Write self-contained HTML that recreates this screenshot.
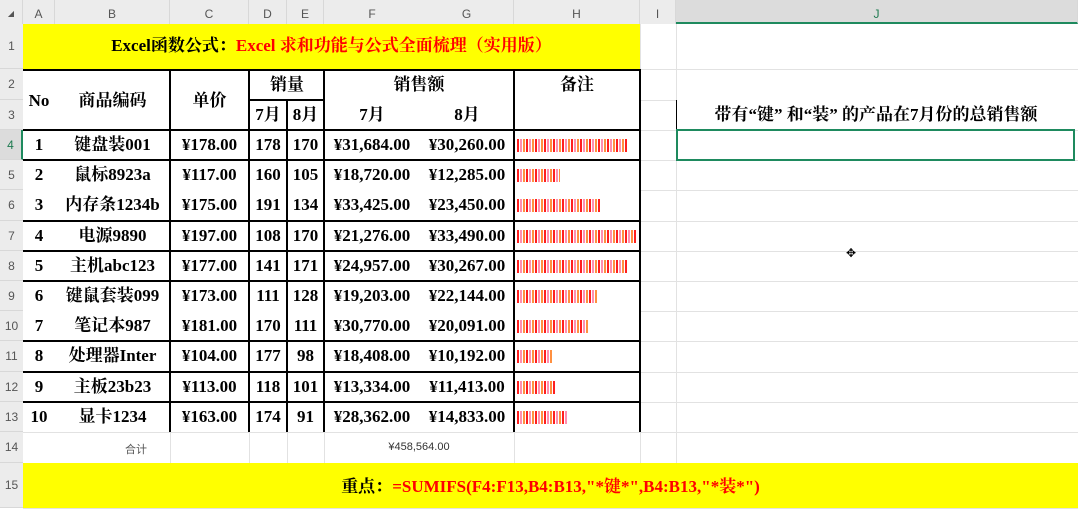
<!DOCTYPE html>
<html><head><meta charset="utf-8"><style>
*{margin:0;padding:0;box-sizing:border-box}
body{width:1078px;height:511px;background:#fff;position:relative;overflow:hidden;font-family:"Liberation Serif","Noto Serif CJK SC",serif}
.a{position:absolute}
.hd{position:absolute;top:0;height:24px;background:#ececec;color:#555;font:12px "Liberation Sans",sans-serif;text-align:center;line-height:28px;border-right:1px solid #d8d8d8}
.rh{position:absolute;left:0;width:23px;background:#ececec;color:#555;font:12px "Liberation Sans",sans-serif;text-align:center;border-bottom:1px solid #d8d8d8}
.gl{position:absolute;background:#e2e2e2}
.t{position:absolute;font-weight:bold;font-size:17px;line-height:20px;color:#000;text-align:center;white-space:nowrap;margin-top:0px}
.bl{position:absolute;background:#000}
svg.bar{position:absolute;left:517px;height:13px}
</style></head><body>
<svg width="0" height="0" style="position:absolute"><defs><pattern id="p" width="9" height="13" patternUnits="userSpaceOnUse"><rect x="0" y="0" width="2" height="13" fill="#ff2020"/><rect x="3" y="0" width="2" height="13" fill="#ff8fb0"/><rect x="6" y="0" width="2" height="13" fill="#ff9040"/></pattern></defs></svg>
<div class="hd" style="left:0;width:23px;font-size:8px">◢</div>
<div class="hd" style="left:23px;width:32px">A</div>
<div class="hd" style="left:55px;width:115px">B</div>
<div class="hd" style="left:170px;width:79px">C</div>
<div class="hd" style="left:249px;width:38px">D</div>
<div class="hd" style="left:287px;width:37px">E</div>
<div class="hd" style="left:324px;width:96px;border-right:none">F</div>
<div class="hd" style="left:420px;width:94px">G</div>
<div class="hd" style="left:514px;width:126px">H</div>
<div class="hd" style="left:640px;width:36px">I</div>
<div class="hd" style="left:676px;width:402px;background:#dcdcdc;border-bottom:2px solid #1e8a5e;color:#1e7a50">J</div>
<div class="rh" style="top:24px;height:45px;line-height:45px">1</div>
<div class="rh" style="top:69px;height:31px;line-height:31px">2</div>
<div class="rh" style="top:100px;height:30px;line-height:30px">3</div>
<div class="rh" style="top:130px;height:30px;line-height:30px;background:#dcdcdc;color:#1e7a50;border-right:2px solid #1e8a5e">4</div>
<div class="rh" style="top:160px;height:30px;line-height:30px">5</div>
<div class="rh" style="top:190px;height:31px;line-height:31px">6</div>
<div class="rh" style="top:221px;height:30px;line-height:30px">7</div>
<div class="rh" style="top:251px;height:30px;line-height:30px">8</div>
<div class="rh" style="top:281px;height:30px;line-height:30px">9</div>
<div class="rh" style="top:311px;height:30px;line-height:30px">10</div>
<div class="rh" style="top:341px;height:31px;line-height:31px">11</div>
<div class="rh" style="top:372px;height:30px;line-height:30px">12</div>
<div class="rh" style="top:402px;height:30px;line-height:30px">13</div>
<div class="rh" style="top:432px;height:31px;line-height:31px">14</div>
<div class="rh" style="top:463px;height:45px;line-height:45px">15</div>
<div class="gl" style="left:640px;top:24px;width:1px;height:440px"></div>
<div class="gl" style="left:676px;top:24px;width:1px;height:440px"></div>
<div class="gl" style="left:249px;top:432px;width:1px;height:31px"></div>
<div class="gl" style="left:287px;top:432px;width:1px;height:31px"></div>
<div class="gl" style="left:324px;top:432px;width:1px;height:31px"></div>
<div class="gl" style="left:514px;top:432px;width:1px;height:31px"></div>
<div class="gl" style="left:170px;top:432px;width:1px;height:31px"></div>
<div class="gl" style="left:640px;top:69px;width:438px;height:1px"></div>
<div class="gl" style="left:640px;top:100px;width:36px;height:1px"></div>
<div class="gl" style="left:640px;top:130px;width:438px;height:1px"></div>
<div class="gl" style="left:640px;top:160px;width:438px;height:1px"></div>
<div class="gl" style="left:640px;top:190px;width:438px;height:1px"></div>
<div class="gl" style="left:640px;top:221px;width:438px;height:1px"></div>
<div class="gl" style="left:640px;top:251px;width:438px;height:1px"></div>
<div class="gl" style="left:640px;top:281px;width:438px;height:1px"></div>
<div class="gl" style="left:640px;top:311px;width:438px;height:1px"></div>
<div class="gl" style="left:640px;top:341px;width:438px;height:1px"></div>
<div class="gl" style="left:640px;top:372px;width:438px;height:1px"></div>
<div class="gl" style="left:640px;top:402px;width:438px;height:1px"></div>
<div class="gl" style="left:23px;top:432px;width:1055px;height:1px"></div>
<div class="gl" style="left:23px;top:463px;width:1055px;height:1px"></div>
<div class="gl" style="left:23px;top:508px;width:1055px;height:1px"></div>
<div class="a" style="left:23px;top:24px;width:617px;height:45px;background:#ffff00"></div>
<div class="a" style="left:23px;top:463px;width:1055px;height:45px;background:#ffff00"></div>
<div class="t" style="left:23px;top:36px;width:617px">Excel函数公式：<span style="color:#f00">Excel 求和功能与公式全面梳理（实用版）</span></div>
<div class="t" style="left:23px;top:477px;width:1055px">重点：<span style="color:#f00">=SUMIFS(F4:F13,B4:B13,"*键*",B4:B13,"*装*")</span></div>
<div class="bl" style="left:23px;top:69px;width:618px;height:2px"></div>
<div class="bl" style="left:23px;top:129px;width:618px;height:2px"></div>
<div class="bl" style="left:23px;top:159px;width:618px;height:2px"></div>
<div class="bl" style="left:23px;top:220px;width:618px;height:2px"></div>
<div class="bl" style="left:23px;top:250px;width:618px;height:2px"></div>
<div class="bl" style="left:23px;top:280px;width:618px;height:2px"></div>
<div class="bl" style="left:23px;top:340px;width:618px;height:2px"></div>
<div class="bl" style="left:23px;top:371px;width:618px;height:2px"></div>
<div class="bl" style="left:23px;top:401px;width:618px;height:2px"></div>
<div class="bl" style="left:249px;top:99px;width:76px;height:2px"></div>
<div class="bl" style="left:169px;top:69px;width:2px;height:363px"></div>
<div class="bl" style="left:248px;top:69px;width:2px;height:363px"></div>
<div class="bl" style="left:286px;top:100px;width:2px;height:332px"></div>
<div class="bl" style="left:323px;top:69px;width:2px;height:363px"></div>
<div class="bl" style="left:513px;top:69px;width:2px;height:363px"></div>
<div class="bl" style="left:639px;top:69px;width:2px;height:363px"></div>
<div class="t" style="left:23px;top:91px;width:32px">No</div>
<div class="t" style="left:55px;top:91px;width:115px">商品编码</div>
<div class="t" style="left:170px;top:91px;width:79px">单价</div>
<div class="t" style="left:249px;top:75px;width:76px">销量</div>
<div class="t" style="left:249px;top:105px;width:38px">7月</div>
<div class="t" style="left:287px;top:105px;width:37px">8月</div>
<div class="t" style="left:324px;top:75px;width:190px">销售额</div>
<div class="t" style="left:324px;top:105px;width:96px">7月</div>
<div class="t" style="left:420px;top:105px;width:94px">8月</div>
<div class="t" style="left:514px;top:75px;width:126px">备注</div>
<div class="bl" style="left:676px;top:100px;width:1px;height:30px"></div>
<div class="t" style="left:676px;top:105px;width:400px">带有“键”  和“装”  的产品在7月份的总销售额</div>
<div class="a" style="left:676px;top:129px;width:399px;height:32px;border:2px solid #1e8a5e"></div>
<div class="a" style="left:846px;top:246px;font-size:12px;color:#000">✥</div>
<div class="t" style="left:23px;top:135px;width:32px">1</div><div class="t" style="left:55px;top:135px;width:115px">键盘装001</div><div class="t" style="left:170px;top:135px;width:79px">¥178.00</div><div class="t" style="left:249px;top:135px;width:38px">178</div><div class="t" style="left:287px;top:135px;width:37px">170</div><div class="t" style="left:324px;top:135px;width:96px">¥31,684.00</div><div class="t" style="left:420px;top:135px;width:94px">¥30,260.00</div><svg class="bar" style="top:139px" width="110"><rect width="110" height="13" fill="url(#p)"/></svg>
<div class="t" style="left:23px;top:165px;width:32px">2</div><div class="t" style="left:55px;top:165px;width:115px">鼠标8923a</div><div class="t" style="left:170px;top:165px;width:79px">¥117.00</div><div class="t" style="left:249px;top:165px;width:38px">160</div><div class="t" style="left:287px;top:165px;width:37px">105</div><div class="t" style="left:324px;top:165px;width:96px">¥18,720.00</div><div class="t" style="left:420px;top:165px;width:94px">¥12,285.00</div><svg class="bar" style="top:169px" width="43"><rect width="43" height="13" fill="url(#p)"/></svg>
<div class="t" style="left:23px;top:195px;width:32px">3</div><div class="t" style="left:55px;top:195px;width:115px">内存条1234b</div><div class="t" style="left:170px;top:195px;width:79px">¥175.00</div><div class="t" style="left:249px;top:195px;width:38px">191</div><div class="t" style="left:287px;top:195px;width:37px">134</div><div class="t" style="left:324px;top:195px;width:96px">¥33,425.00</div><div class="t" style="left:420px;top:195px;width:94px">¥23,450.00</div><svg class="bar" style="top:199px" width="84"><rect width="84" height="13" fill="url(#p)"/></svg>
<div class="t" style="left:23px;top:226px;width:32px">4</div><div class="t" style="left:55px;top:226px;width:115px">电源9890</div><div class="t" style="left:170px;top:226px;width:79px">¥197.00</div><div class="t" style="left:249px;top:226px;width:38px">108</div><div class="t" style="left:287px;top:226px;width:37px">170</div><div class="t" style="left:324px;top:226px;width:96px">¥21,276.00</div><div class="t" style="left:420px;top:226px;width:94px">¥33,490.00</div><svg class="bar" style="top:230px" width="120"><rect width="120" height="13" fill="url(#p)"/></svg>
<div class="t" style="left:23px;top:256px;width:32px">5</div><div class="t" style="left:55px;top:256px;width:115px">主机abc123</div><div class="t" style="left:170px;top:256px;width:79px">¥177.00</div><div class="t" style="left:249px;top:256px;width:38px">141</div><div class="t" style="left:287px;top:256px;width:37px">171</div><div class="t" style="left:324px;top:256px;width:96px">¥24,957.00</div><div class="t" style="left:420px;top:256px;width:94px">¥30,267.00</div><svg class="bar" style="top:260px" width="110"><rect width="110" height="13" fill="url(#p)"/></svg>
<div class="t" style="left:23px;top:286px;width:32px">6</div><div class="t" style="left:55px;top:286px;width:115px">键鼠套装099</div><div class="t" style="left:170px;top:286px;width:79px">¥173.00</div><div class="t" style="left:249px;top:286px;width:38px">111</div><div class="t" style="left:287px;top:286px;width:37px">128</div><div class="t" style="left:324px;top:286px;width:96px">¥19,203.00</div><div class="t" style="left:420px;top:286px;width:94px">¥22,144.00</div><svg class="bar" style="top:290px" width="80"><rect width="80" height="13" fill="url(#p)"/></svg>
<div class="t" style="left:23px;top:316px;width:32px">7</div><div class="t" style="left:55px;top:316px;width:115px">笔记本987</div><div class="t" style="left:170px;top:316px;width:79px">¥181.00</div><div class="t" style="left:249px;top:316px;width:38px">170</div><div class="t" style="left:287px;top:316px;width:37px">111</div><div class="t" style="left:324px;top:316px;width:96px">¥30,770.00</div><div class="t" style="left:420px;top:316px;width:94px">¥20,091.00</div><svg class="bar" style="top:320px" width="72"><rect width="72" height="13" fill="url(#p)"/></svg>
<div class="t" style="left:23px;top:346px;width:32px">8</div><div class="t" style="left:55px;top:346px;width:115px">处理器Inter</div><div class="t" style="left:170px;top:346px;width:79px">¥104.00</div><div class="t" style="left:249px;top:346px;width:38px">177</div><div class="t" style="left:287px;top:346px;width:37px">98</div><div class="t" style="left:324px;top:346px;width:96px">¥18,408.00</div><div class="t" style="left:420px;top:346px;width:94px">¥10,192.00</div><svg class="bar" style="top:350px" width="35"><rect width="35" height="13" fill="url(#p)"/></svg>
<div class="t" style="left:23px;top:377px;width:32px">9</div><div class="t" style="left:55px;top:377px;width:115px">主板23b23</div><div class="t" style="left:170px;top:377px;width:79px">¥113.00</div><div class="t" style="left:249px;top:377px;width:38px">118</div><div class="t" style="left:287px;top:377px;width:37px">101</div><div class="t" style="left:324px;top:377px;width:96px">¥13,334.00</div><div class="t" style="left:420px;top:377px;width:94px">¥11,413.00</div><svg class="bar" style="top:381px" width="39"><rect width="39" height="13" fill="url(#p)"/></svg>
<div class="t" style="left:23px;top:407px;width:32px">10</div><div class="t" style="left:55px;top:407px;width:115px">显卡1234</div><div class="t" style="left:170px;top:407px;width:79px">¥163.00</div><div class="t" style="left:249px;top:407px;width:38px">174</div><div class="t" style="left:287px;top:407px;width:37px">91</div><div class="t" style="left:324px;top:407px;width:96px">¥28,362.00</div><div class="t" style="left:420px;top:407px;width:94px">¥14,833.00</div><svg class="bar" style="top:411px" width="50"><rect width="50" height="13" fill="url(#p)"/></svg>
<div class="a" style="left:23px;top:441px;width:226px;text-align:center;font:11px 'Noto Sans CJK SC',sans-serif;color:#555">合计</div>
<div class="a" style="left:324px;top:441px;width:190px;text-align:center;font:11px 'Liberation Sans',sans-serif;color:#333">¥458,564.00</div>
</body></html>
